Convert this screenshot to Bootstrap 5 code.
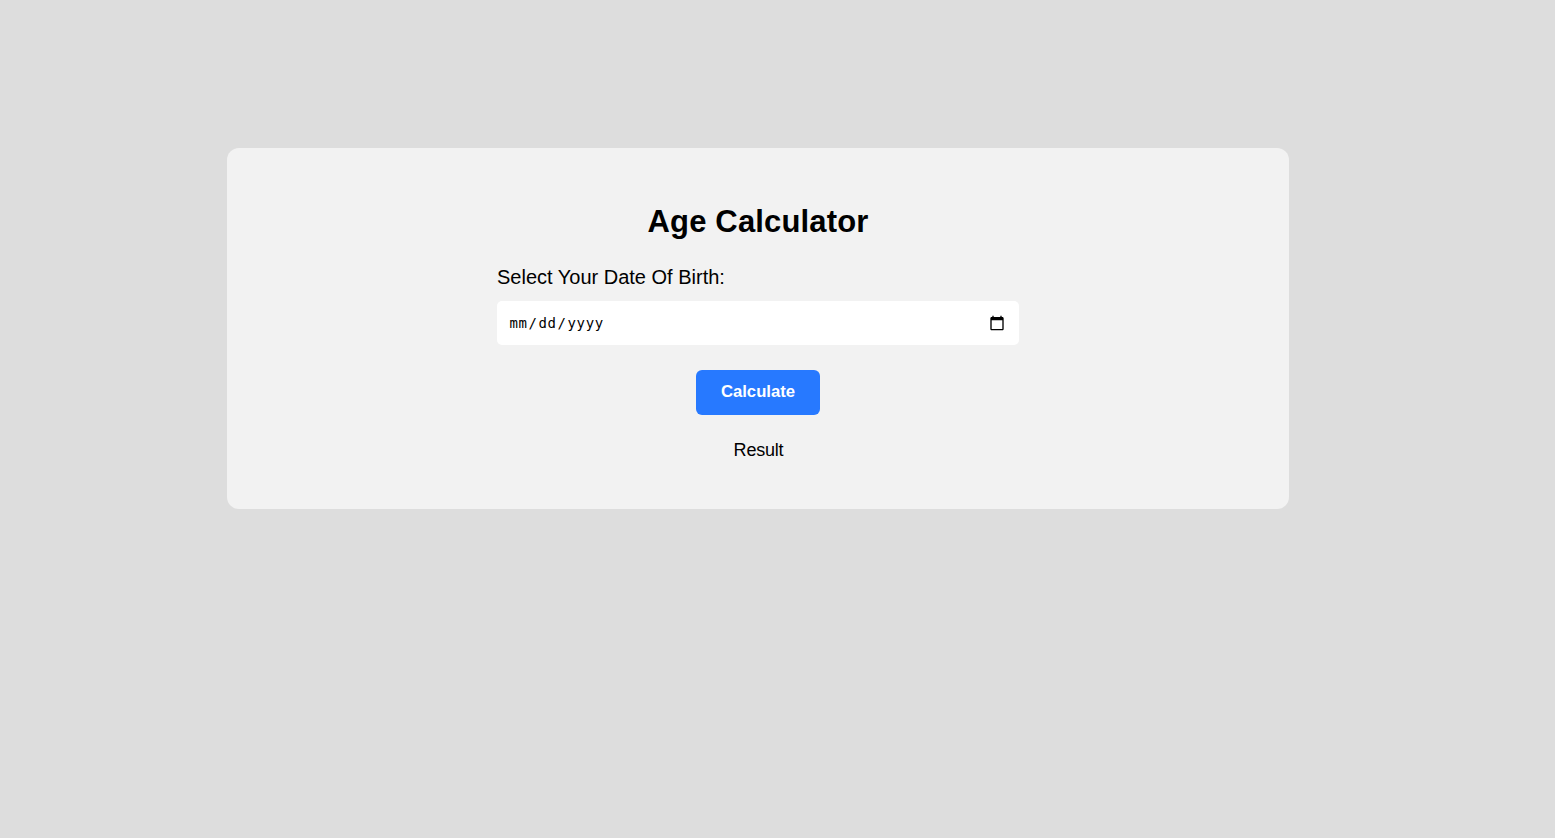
<!DOCTYPE html>
<html lang="en">
<head>
<meta charset="utf-8">
<title>Age Calculator</title>
<link href="https://cdn.jsdelivr.net/npm/bootstrap@5.3.0/dist/css/bootstrap.min.css" rel="stylesheet">
<style>
body{background:#ddd;color:#000;font-family:"Liberation Sans",Arial,sans-serif}
.calc{width:1062px;height:361px;margin:148px 0 0 227px;padding-top:54px;background:#f2f2f2;border-radius:12px}
.calc h1{font-size:31px;line-height:40px;letter-spacing:.15px}
.dob{width:522px}
.dob label{font-size:20px;line-height:24px;margin-top:23px;margin-bottom:12px}
.dob .form-control{height:44px;padding:0 14px 0 12.4px;border-radius:5px;color:#000}
.datehint{font:14px/16px "DejaVu Sans Mono",monospace;letter-spacing:.6px;padding-bottom:1px}
.datehint i{font-style:normal;margin:0 1px}
.go{width:124px;height:45px;margin-top:25px;padding:0 0 2px;border-radius:6px;background:#2779ff;color:#fff;font-size:16.7px}
.result{font-size:18px;line-height:22px;margin-top:24px;padding-left:1px;letter-spacing:-.2px}
</style>
</head>
<body>
<main class="calc d-flex flex-column align-items-center">
<h1 class="fw-bold mb-0">Age Calculator</h1>
<form class="dob d-flex flex-column">
<label for="dob">Select Your Date Of Birth:</label>
<div id="dob" class="form-control border-0 d-flex align-items-center justify-content-between">
<span class="datehint">mm<i>/</i>dd<i>/</i>yyyy</span>
<svg width="16" height="16" viewBox="0 0 24 24"><path d="M20 3h-1V1h-2v2H7V1H5v2H4c-1.100 0-2 .9-2 2v16c0 1.100.9 2 2 2h16c1.100 0 2-.9 2-2V5c0-1.100-.9-2-2-2zm0 18H4V8h16v13z"/></svg>
</div>
<button type="button" class="go btn border-0 fw-bold align-self-center">Calculate</button>
</form>
<div class="result">Result</div>
</main>
<script src="https://cdn.jsdelivr.net/npm/bootstrap@5.3.0/dist/js/bootstrap.bundle.min.js"></script>
</body>
</html>
